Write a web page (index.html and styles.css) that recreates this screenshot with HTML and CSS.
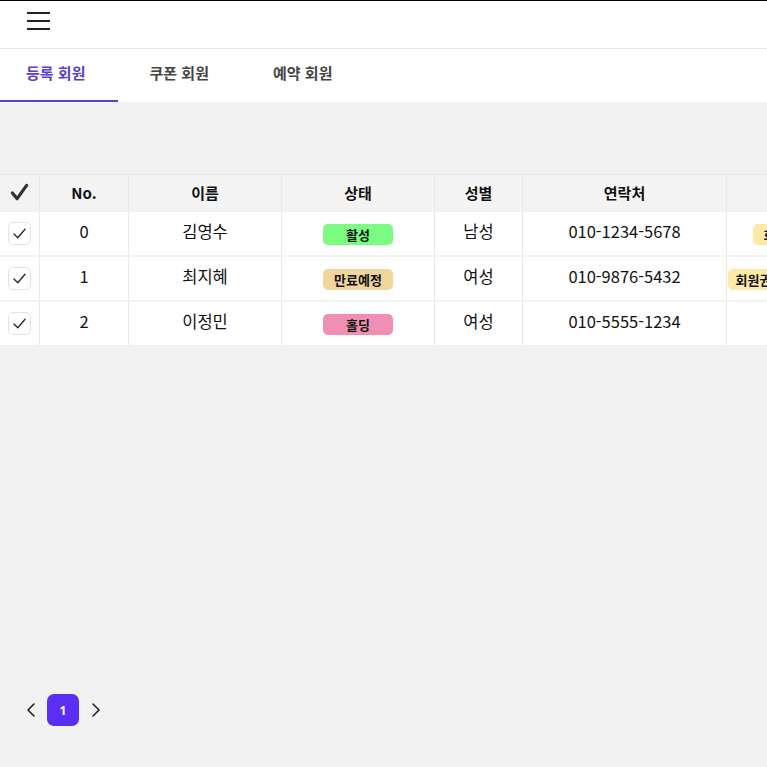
FILE: index.html
```html
<!DOCTYPE html>
<html lang="ko">
<head>
<meta charset="utf-8">
<title>회원 관리</title>
<link rel="stylesheet" href="styles.css">
</head>
<body>
<div class="app">
  <header class="topbar">
    <button class="menu-btn" aria-label="메뉴">
      <span></span><span></span><span></span>
    </button>
  </header>
  <nav class="tabs">
    <div class="tab active">등록 회원</div>
    <div class="tab">쿠폰 회원</div>
    <div class="tab">예약 회원</div>
  </nav>
  <main class="content">
    <div class="table">
      <div class="row head">
        <div class="cell"><svg class="head-check" viewBox="0 0 20 20" width="19" height="19"><path d="M2.5 10.5 L7.5 16.5 L17.5 2.5" fill="none" stroke="#333" stroke-width="3.4" stroke-linecap="round" stroke-linejoin="round"/></svg></div>
        <div class="cell">No.</div>
        <div class="cell">이름</div>
        <div class="cell">상태</div>
        <div class="cell">성별</div>
        <div class="cell">연락처</div>
        <div class="cell"></div>
      </div>
      <div class="row">
        <div class="cell"><span class="checkbox"><svg viewBox="0 0 20 20" width="17" height="17"><path d="M3.5 10.5 L8 15 L16.5 5" fill="none" stroke="#222" stroke-width="1.5" stroke-linecap="round" stroke-linejoin="round"/></svg></span></div>
        <div class="cell">0</div>
        <div class="cell">김영수</div>
        <div class="cell"><span class="badge green">활성</span></div>
        <div class="cell">남성</div>
        <div class="cell">010-1234-5678</div>
        <div class="cell"><span class="badge yellow">회원권</span></div>
      </div>
      <div class="row">
        <div class="cell"><span class="checkbox"><svg viewBox="0 0 20 20" width="17" height="17"><path d="M3.5 10.5 L8 15 L16.5 5" fill="none" stroke="#222" stroke-width="1.5" stroke-linecap="round" stroke-linejoin="round"/></svg></span></div>
        <div class="cell">1</div>
        <div class="cell">최지혜</div>
        <div class="cell"><span class="badge tan">만료예정</span></div>
        <div class="cell">여성</div>
        <div class="cell">010-9876-5432</div>
        <div class="cell"><span class="badge yellow wide">회원권 만료예정</span></div>
      </div>
      <div class="row">
        <div class="cell"><span class="checkbox"><svg viewBox="0 0 20 20" width="17" height="17"><path d="M3.5 10.5 L8 15 L16.5 5" fill="none" stroke="#222" stroke-width="1.5" stroke-linecap="round" stroke-linejoin="round"/></svg></span></div>
        <div class="cell">2</div>
        <div class="cell">이정민</div>
        <div class="cell"><span class="badge pink">홀딩</span></div>
        <div class="cell">여성</div>
        <div class="cell">010-5555-1234</div>
        <div class="cell"></div>
      </div>
    </div>
    <div class="pagination">
      <button class="page-arrow" aria-label="이전"><svg viewBox="0 0 12 16" width="12" height="16"><path d="M9 2 L3 8 L9 14" fill="none" stroke="#222" stroke-width="1.6" stroke-linecap="round" stroke-linejoin="round"/></svg></button>
      <button class="page-num">1</button>
      <button class="page-arrow" aria-label="다음"><svg viewBox="0 0 12 16" width="12" height="16"><path d="M3 2 L9 8 L3 14" fill="none" stroke="#222" stroke-width="1.6" stroke-linecap="round" stroke-linejoin="round"/></svg></button>
    </div>
  </main>
</div>
</body>
</html>
```
FILE: styles.css
```css
* { box-sizing: border-box; }
html, body {
  margin: 0;
  padding: 0;
  height: 100%;
  overflow: hidden;
}
body {
  font-family: "Noto Sans CJK KR", "Noto Sans", sans-serif;
  color: #111;
  background: #f2f2f2;
}
.app {
  display: flex;
  flex-direction: column;
  height: 100vh;
}
.topbar {
  height: 49px;
  flex: none;
  background: #fff;
  border-top: 1px solid #000;
  border-bottom: 1px solid #e6e6e6;
  display: flex;
  align-items: flex-start;
}
.menu-btn {
  margin: 11px 0 0 27px;
  width: 23px;
  height: 18px;
  padding: 0;
  border: 0;
  background: transparent;
  display: flex;
  flex-direction: column;
  justify-content: space-between;
}
.menu-btn span {
  display: block;
  height: 2px;
  width: 23px;
  background: #222;
}
.tabs {
  height: 53px;
  flex: none;
  background: #fff;
  display: flex;
  margin-left: -6px;
}
.tab {
  width: 123.5px;
  display: flex;
  align-items: center;
  justify-content: center;
  font-size: 15px;
  font-weight: 700;
  color: #444;
  border-bottom: 2px solid transparent;
  padding-bottom: 4px;
}
.tab.active {
  color: #5b3fcc;
  border-bottom-color: #5845c4;
}
.content {
  flex: 1;
  display: flex;
  flex-direction: column;
  padding-top: 72px;
  padding-bottom: 41px;
  min-height: 0;
}
.table {
  display: flex;
  flex-direction: column;
  gap: 2px;
  width: 837px;
  border-top: 1px solid #e6e6e6;
}
.row {
  display: grid;
  grid-template-columns: 40px 89px 153px 153px 88px 204px 110px;
  height: 43px;
  background: #fff;
}
.row.head {
  height: 35px;
  background: #f4f4f4;
}
.cell {
  display: flex;
  align-items: center;
  justify-content: center;
  border-right: 1px solid #e8e8e8;
  font-size: 16.5px;
  padding-bottom: 5px;
  white-space: nowrap;
  overflow: hidden;
}
.head .cell {
  font-size: 15px;
  font-weight: 700;
  padding-bottom: 1px;
}
.head-check { display: block; }
.checkbox {
  width: 23px;
  height: 23px;
  border: 1px solid #e2e2e2;
  border-radius: 5px;
  display: flex;
  align-items: center;
  justify-content: center;
  background: #fff;
  margin-top: 5px;
}
.badge {
  display: inline-flex;
  align-items: center;
  justify-content: center;
  height: 21px;
  min-width: 70px;
  padding: 0 8px;
  border-radius: 5px;
  font-size: 13px;
  font-weight: 700;
  color: #111;
  margin-top: 7px;
}
.badge.green { background: #7bfb7f; }
.badge.tan { background: #f0d59c; }
.badge.pink { background: #ef8fb3; }
.badge.yellow { background: #fdeaa9; min-width: 58px; }
.badge.wide { width: 108px; flex: none; justify-content: flex-start; }
.pagination {
  margin-top: auto;
  display: flex;
  align-items: center;
  padding-left: 24px;
  gap: 10px;
}
.page-arrow {
  border: 0;
  background: transparent;
  padding: 0;
  width: 13px;
  height: 16px;
  display: flex;
  align-items: center;
  justify-content: center;
}
.page-num {
  width: 32px;
  height: 32px;
  border: 0;
  border-radius: 7px;
  background: #5b2ef4;
  color: #fff;
  font-family: "Noto Sans", sans-serif;
  font-weight: 700;
  font-size: 12px;
  padding: 0;
}
```
